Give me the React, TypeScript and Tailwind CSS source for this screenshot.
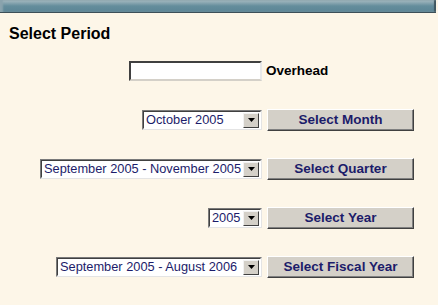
const navy = 'text-[#1c1c6a]'

function Select({ width, value }: { width: number; value: string }) {
  return (
    <div
      className="flex h-[20px] items-center border border-t-[#7a7a7a] border-l-[#7a7a7a] border-b-[#e4e4e4] border-r-[#e4e4e4] bg-white"
      style={{ width }}
    >
      <div className="flex h-full flex-1 items-center border border-t-[#404040] border-l-[#404040] border-b-white border-r-white pl-[2px]">
        <span className={`flex-1 whitespace-nowrap text-[12.8px] leading-none ${navy}`}>{value}</span>
        <div className="mr-px flex h-[15px] w-[16px] items-center justify-center border border-t-[#f2f2f2] border-l-[#f2f2f2] border-b-[#404040] border-r-[#404040] bg-[#d4d0c8]">
          <svg width="7" height="4" viewBox="0 0 7 4">
            <path d="M0 0h7L3.5 4z" fill="#000" />
          </svg>
        </div>
      </div>
    </div>
  )
}

function Button({ label }: { label: string }) {
  return (
    <button className="h-[22px] w-[147px] border border-t-white border-l-white border-b-[#404040] border-r-[#404040] bg-[#d4d0c8] text-[13.5px] font-bold leading-none text-[#1c1c6a] shadow-[inset_-1px_-1px_0_#808080]">
      {label}
    </button>
  )
}

function Row({ left, right }: { left: React.ReactNode; right: React.ReactNode }) {
  return (
    <div className="flex h-[22px] items-center">
      <div className="flex w-[262px] justify-end">{left}</div>
      <div className="ml-[5px] flex items-center">{right}</div>
    </div>
  )
}

export default function App() {
  return (
    <div className="h-[305px] w-[438px] bg-[#fdf6e8] font-['Liberation_Sans',Arial,sans-serif]">
      <div className="h-[13px] w-[436px] border-b border-b-[#3c4f58] bg-gradient-to-b from-[#a9bcc3] via-[#648d9c] to-[#5c8595] shadow-[inset_3px_0_2px_#8aa3ad,inset_-2px_0_1px_#3f5660]" />
      <h1 className="pl-[9px] pt-[12px] text-[16px] font-bold leading-[18px] text-black">Select Period</h1>

      <div className="mt-[17px] flex flex-col gap-[27px]">
        <Row
          left={
            <input className="h-[20px] w-[133px] border-2 border-t-[#404040] border-l-[#404040] border-b-[#d4d0c8] border-r-[#e8e8e8] bg-white" />
          }
          right={<span className="-ml-px text-[13.5px] font-bold text-black">Overhead</span>}
        />
        <Row left={<Select width={120} value="October 2005" />} right={<Button label="Select Month" />} />
        <Row
          left={<Select width={222} value="September 2005 - November 2005" />}
          right={<Button label="Select Quarter" />}
        />
        <Row left={<Select width={54} value="2005" />} right={<Button label="Select Year" />} />
        <Row
          left={<Select width={206} value="September 2005 - August 2006" />}
          right={<Button label="Select Fiscal Year" />}
        />
      </div>
    </div>
  )
}
